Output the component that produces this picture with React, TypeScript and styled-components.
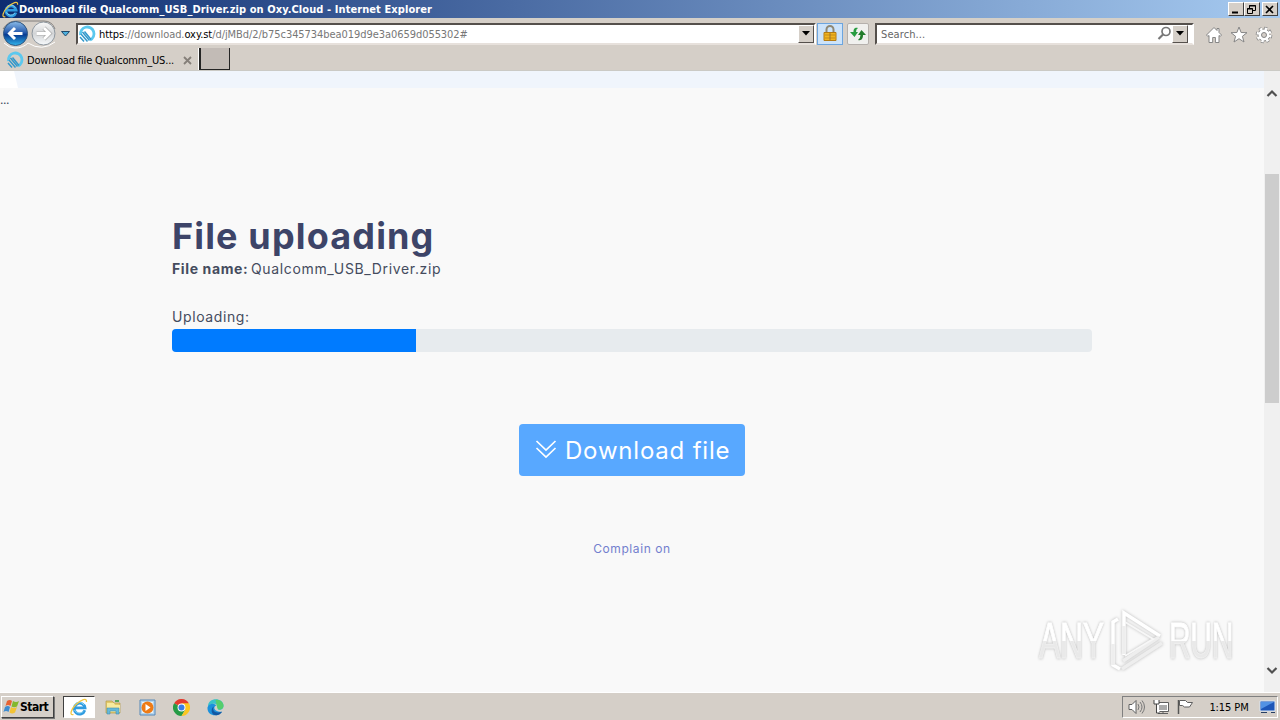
import React from 'react';
import styled, { createGlobalStyle } from 'styled-components';

const App = () => {
  return (
    <Desktop>
      <GlobalStyle />
      <TitleBar>
        <IeIcon size={17} />
        <TitleText>Download file Qualcomm_USB_Driver.zip on Oxy.Cloud - Internet Explorer</TitleText>
        <WindowButton aria-label="Minimize">
          <svg width="13" height="11"><path d="M3 8.500h6" stroke="#000" strokeWidth="2" /></svg>
        </WindowButton>
        <WindowButton aria-label="Restore">
          <svg width="13" height="11" fill="none" stroke="#000">
            <path d="M4.500 4V1.500h6v5H8M4 2h7M2.500 4.500h5v5h-5zM2 5h6" />
          </svg>
        </WindowButton>
        <WindowButton aria-label="Close" $gap={2}>
          <svg width="13" height="11"><path d="M3 2l7 7M10 2l-7 7" stroke="#000" strokeWidth="1.600" /></svg>
        </WindowButton>
      </TitleBar>

      <Toolbar>
        <NavButtons />
        <AddressBar>
          <OxyIcon />
          <Url>
            <b>https</b>://download.<b>oxy.st</b>/d/jMBd/2/b75c345734bea019d9e3a0659d055302#
          </Url>
          <DropButton><Triangle /></DropButton>
        </AddressBar>
        <LockButton><LockIcon /></LockButton>
        <RefreshButton><RefreshIcon /></RefreshButton>
        <SearchBar>
          <SearchText>Search...</SearchText>
          <svg width="15" height="15" viewBox="0 0 15 15" fill="none" stroke="#777">
            <circle cx="9" cy="5.500" r="4" strokeWidth="1.700" />
            <path d="M6 8.500L1.500 13" strokeWidth="2.200" />
          </svg>
          <DropButton><Triangle /></DropButton>
        </SearchBar>
        <ToolIcons>
          <svg width="18" height="18" viewBox="0 0 18 18" fill="#fff" stroke="#858585" strokeLinejoin="round">
            <path d="M9 1.500L1.500 9l1.300 1.400L4 9.500v7h3.700v-5h2.700v5H14v-7l1.300.9L16.500 9 14 6.500v-4h-2v2z" />
          </svg>
          <svg width="18" height="18" viewBox="0 0 18 18" fill="#fff" stroke="#858585" strokeLinejoin="round">
            <path d="M9 1l2.100 5.500 5.900.2-4.600 3.600L14 16l-5-3.300L4 16l1.600-5.700L1 6.700l5.900-.2z" />
          </svg>
          <GearIcon />
        </ToolIcons>
      </Toolbar>

      <TabRow>
        <Tab>
          <OxyIcon />
          <TabLabel>Download file Qualcomm_US...</TabLabel>
          <svg width="9" height="9"><path d="M1 1l7 7M8 1L1 8" stroke="#857f79" strokeWidth="1.800" /></svg>
        </Tab>
        <NewTab />
      </TabRow>

      <Viewport>
        <Page>
          <PageHeader>
            <svg width="20" height="17"><path d="M0 0h14l4 17H0z" fill="#fff" /></svg>
          </PageHeader>
          <Ellipsis>...</Ellipsis>
          <Content>
            <Heading>File uploading</Heading>
            <FileName>
              <FileLabel>File name:</FileLabel>
              <FileValue>Qualcomm_USB_Driver.zip</FileValue>
            </FileName>
            <UploadLabel>Uploading:</UploadLabel>
            <Progress><ProgressFill /></Progress>
            <DownloadButton>
              <svg width="22" height="20" viewBox="0 0 22 20" fill="none" stroke="#fff" strokeWidth="1.700">
                <path d="M1.500 1L11 10l9.500-9M1.500 8L11 17l9.500-9" />
              </svg>
              <DownloadText>Download file</DownloadText>
            </DownloadButton>
            <Complain>Complain on</Complain>
          </Content>
          <Watermark>
            <WatermarkText $scale={0.64}>ANY</WatermarkText>
            <PlayLogo />
            <WatermarkText $scale={0.6}>RUN</WatermarkText>
          </Watermark>
        </Page>
        <Scrollbar>
          <svg width="12" height="8"><path d="M1.500 7L6 2.500 10.500 7" fill="none" stroke="#505050" strokeWidth="2.200" /></svg>
          <Thumb />
          <svg width="12" height="8"><path d="M1.500 1L6 5.500 10.500 1" fill="none" stroke="#505050" strokeWidth="2.200" /></svg>
        </Scrollbar>
      </Viewport>

      <Taskbar>
        <StartButton>
          <WindowsIcon />
          <StartText>Start</StartText>
        </StartButton>
        <TaskButton $active><IeIcon size={18} /></TaskButton>
        <TaskButton><FolderIcon /></TaskButton>
        <TaskButton><PlayerIcon /></TaskButton>
        <TaskButton><ChromeIcon /></TaskButton>
        <TaskButton><EdgeIcon /></TaskButton>
        <Tray>
          <TrayIcons />
          <Clock>1:15 PM</Clock>
          <svg width="17" height="14" viewBox="0 0 17 14">
            <path d="M1 1h15v10H1z" fill="#1d56b8" stroke="#d9e5f2" />
            <path d="M2 2h13L2 9z" fill="#5292e4" />
            <path d="M2 12.500h6M12 12.500h4" stroke="#263e63" />
          </svg>
        </Tray>
      </Taskbar>
    </Desktop>
  );
};

export default App;

const IeIcon = ({ size }: { size: number }) => (
  <svg width={size} height={size} viewBox="0 0 18 18" fill="none">
    <path d="M14.800 12.300A5.400 5.400 0 1 1 15 9.800H5" stroke="#2f9be0" strokeWidth="2.800" />
    <path d="M13.500 13A5.400 5.400 0 0 1 4.500 12M4.500 7A5.500 5.500 0 0 1 14 7" stroke="#8bd8f7" />
    <path d="M3.500 16.500C-1 18 1 11 6 6.500S17 -1 16.500 4" stroke="#f0c643" strokeWidth="1.300" />
  </svg>
);

const OxyIcon = () => (
  <svg width="18" height="18" viewBox="0 0 18 18" fill="none">
    <path d="M2.500 10a6.800 6.800 0 1 1 9.500 5" stroke="#5bc8ee" strokeWidth="2.800" />
    <path d="M4.500 7l7 8.500M3 9l6.500 7.500M6.500 6.500l6.500 8M2 12l4 4.500" stroke="#3298cb" strokeWidth="1.500" />
  </svg>
);

const NavButtons = () => (
  <svg width="76" height="30" viewBox="0 0 76 30">
    <defs>
      <linearGradient id="back" x1="0" y1="0" x2="0" y2="1">
        <stop stopColor="#8bbce9" />
        <stop offset=".45" stopColor="#295cae" />
        <stop offset=".55" stopColor="#073b92" />
        <stop offset="1" stopColor="#32b6ed" />
      </linearGradient>
      <linearGradient id="forward" x1="0" y1="0" x2="0" y2="1">
        <stop stopColor="#fafafa" />
        <stop offset=".5" stopColor="#d2d4d6" />
        <stop offset="1" stopColor="#f7fafc" />
      </linearGradient>
    </defs>
    <path d="M3 10Q8 2 16 2h28q8 0 11 8" fill="none" stroke="#827f7d" />
    <path d="M4 24q5 5 11 5 8 0 13-5 14 9 27-1" fill="none" stroke="#fff" />
    <circle cx="15.500" cy="14.500" r="12" fill="url(#back)" stroke="#31567f" />
    <circle cx="43.500" cy="14.500" r="11.500" fill="url(#forward)" stroke="#8e979f" />
    <path d="M22.500 14.500H10M15 9l-5.500 5.500 5.500 5.500" fill="none" stroke="#fff" strokeWidth="3" />
    <path d="M36.500 14.500H49M44 9l5.500 5.500-5.500 5.500" fill="none" stroke="#aaa" strokeWidth="4.200" />
    <path d="M36.500 14.500H49M44 9l5.500 5.500-5.500 5.500" fill="none" stroke="#fff" strokeWidth="2.800" />
    <path d="M61.500 12.500h8L65.500 17z" fill="#4db1df" stroke="#214a6b" />
  </svg>
);

const Triangle = () => (
  <svg width="8" height="5"><path d="M0 0h8L4 4.500z" fill="#000" /></svg>
);

const LockIcon = () => (
  <svg width="14" height="18" viewBox="0 0 14 18">
    <path d="M3.500 8V4.500a3.500 3.500 0 0 1 7 0V8" fill="none" stroke="#8f8874" strokeWidth="2" />
    <path d="M1 7.500h12v8H1z" fill="#f0b421" stroke="#b37a13" />
    <path d="M2 10h10M2 13h10" stroke="#c78b16" />
    <path d="M7 8v7" stroke="#9b752c" />
  </svg>
);

const RefreshIcon = () => (
  <svg width="18" height="16" viewBox="0 0 18 16">
    <path d="M9 2C5 1 4.500 4 4.500 6H1l4.500 5L9 6H7q0-3 2-4z" fill="#279c40" />
    <path d="M9 14c4 1 5-2 5-5h3l-4.500-5L9 9h2.500q0 3-2.500 5z" fill="#237d2c" />
  </svg>
);

const GearIcon = () => (
  <svg width="18" height="18" viewBox="0 0 18 18">
    <circle cx="9" cy="9" r="6.800" fill="none" stroke="#858585" strokeWidth="3" strokeDasharray="2.900 2.440" />
    <circle cx="9" cy="9" r="6" fill="#fff" stroke="#858585" />
    <circle cx="9" cy="9" r="6.300" fill="none" stroke="#fff" strokeWidth="2.400" strokeDasharray="2.400 2.550" />
    <circle cx="9" cy="9" r="2.500" fill="#d5cfc8" stroke="#858585" />
  </svg>
);

const PlayLogo = () => (
  <Logo width="60" height="66" viewBox="0 0 60 66" fill="none" strokeWidth="3.500">
    <path d="M18 47V5l36 23M12 11L7 14v43l7 4" stroke="#fff" />
    <path d="M18 46V18M53 29L17 53M56 35L16 61M7 36v21" stroke="#eeeeee" />
    <path d="M19 14l28 17-28 17" stroke="#f7f7f7" strokeWidth="2" />
  </Logo>
);

const WindowsIcon = () => (
  <svg width="17" height="16" viewBox="0 0 17 16">
    <path d="M4 2q3-2 5 0L7.500 7q-2.500-2-5 0z" fill="#e76333" />
    <path d="M10 2q3 2 6 0l-2 5.500q-3 1.500-5.500 0z" fill="#83b82e" />
    <path d="M2 8q3-2 5 0l-1.500 5q-2.500-2-5 0z" fill="#3e8cd0" />
    <path d="M8 8q3 2 6 0l-2 5.500q-3 2-5.500 0z" fill="#f3c334" />
  </svg>
);

const FolderIcon = () => (
  <svg width="18" height="18" viewBox="0 0 18 18">
    <path d="M2 3h6l2 2h6v10H2z" fill="#e3c96b" stroke="#b69c4a" strokeWidth=".7" />
    <path d="M3 5h7l1 2h5v7H3z" fill="#f8eb9e" />
    <path d="M3 16v-6h12v6h-3v-3H6v3z" fill="#65b9d9" stroke="#458fae" strokeWidth=".6" />
    <path d="M11 3h4" stroke="#55a65a" strokeWidth="2" />
  </svg>
);

const PlayerIcon = () => (
  <svg width="17" height="17" viewBox="0 0 17 17">
    <path d="M1 1h15v15H1z" fill="#b5d5ed" stroke="#5688b9" />
    <path d="M3 3h11v11H3z" fill="#e9f3f9" />
    <circle cx="8.500" cy="8.500" r="6" fill="#ee7b16" />
    <path d="M6.500 5v7l5-3.500z" fill="#fff" />
  </svg>
);

const ChromeIcon = () => (
  <svg width="17" height="17" viewBox="0 0 18 18">
    <path d="M9 9L1.200 4.500a9 9 0 0 1 15.600 0z" fill="#e33b2e" />
    <path d="M9 9L1.200 4.500A9 9 0 0 0 9 18l4-6.700z" fill="#269b46" />
    <path d="M9 4.500h7.800A9 9 0 0 1 9 18l4-6.700z" fill="#fbc620" />
    <circle cx="9" cy="9" r="4.200" fill="#fff" />
    <circle cx="9" cy="9" r="3.200" fill="#397de6" />
  </svg>
);

const EdgeIcon = () => (
  <svg width="17" height="17" viewBox="0 0 18 18">
    <path d="M1 8C1-2 17-2 17.500 7c0 5-4 5-6 4 2-2 0-6-4-6C4 5 2 7 1 8z" fill="#3ac2c9" />
    <path d="M9 1c5-1 10 4 8 8-2 3-5 2-6 1z" fill="#55ce6c" />
    <path d="M.5 9C2 4 8 4 10 7c-4 1-3 7 6 6.500C11 20 0 18 .5 9z" fill="#1b91dc" />
    <path d="M7.500 8c-3 4 1 8 8.500 5.500-3 5-10 5-11 0-.5-3 1-5 2.500-5.500z" fill="#1257a2" />
  </svg>
);

const TrayIcons = () => (
  <svg width="69" height="18" viewBox="0 0 69 18" fill="#fff" stroke="#5f5f5f">
    <path d="M2 6.500h3l4-4v13l-4-4H2z" />
    <path d="M11 6q2 3 0 6M13 4q4 5 0 10M15 2.500q5 6.500 0 13" fill="none" stroke="#777" />
    <path d="M29.500 4.500h12v9h-12zM31 15.500h10M36 14v2" />
    <path d="M32 7h8v5h-8z" fill="#aaa" stroke="none" />
    <path d="M27 2v4h5V2M29.500 6v9H33" fill="#fff" stroke="#444" />
    <path d="M51.500 2v14" stroke="#555" strokeWidth="1.500" />
    <path d="M52.500 2.500h6l2 2h5l-3 4.500h-5l-2-1.500h-3z" />
  </svg>
);

const GlobalStyle = createGlobalStyle`
  * {
    box-sizing: border-box;
  }
  body {
    margin: 0;
    overflow: hidden;
  }
  svg {
    display: block;
    flex-shrink: 0;
  }
`;

const Desktop = styled.div`
  width: 1280px;
  height: 720px;
  display: flex;
  flex-direction: column;
  background-color: #d5cfc8;
  font-family: 'DejaVu Sans Condensed', 'DejaVu Sans', sans-serif;
  font-size: 11px;
  color: #000000;
  white-space: nowrap;
`;

const TitleBar = styled.div`
  height: 18px;
  display: flex;
  align-items: center;
  padding: 0 2px;
  background: linear-gradient(90deg, #0d2c70, #a6caf0);
`;

const TitleText = styled.span`
  flex: 1;
  color: #ffffff;
  font-weight: 700;
  letter-spacing: 0.08px;
`;

const WindowButton = styled.button<{ $gap?: number }>`
  width: 16px;
  height: 14px;
  padding: 0;
  margin-left: ${({ $gap }) => $gap ?? 0}px;
  background-color: #d5cfc8;
  border: 1px solid;
  border-color: #ffffff #404040 #404040 #ffffff;
`;

const Toolbar = styled.div`
  height: 30px;
  display: flex;
  align-items: center;
  border-top: 1px solid #d4d0c8;
`;

const AddressBar = styled.div`
  width: 740px;
  height: 22px;
  display: flex;
  align-items: center;
  background-color: #ffffff;
  border: 2px solid;
  border-color: #55504c #ffffff #e7e1dc #55504c;
`;

const Url = styled.span`
  flex: 1;
  margin-left: 3px;
  padding-top: 1px;
  color: #777777;
  letter-spacing: -0.06px;
  b {
    color: #000000;
    font-weight: 400;
  }
`;

const DropButton = styled.button`
  width: 16px;
  height: 18px;
  display: flex;
  align-items: center;
  justify-content: center;
  padding: 0;
  background-color: #d5cfc8;
  border: 1px solid;
  border-color: #ffffff #55504c #55504c #ffffff;
`;

const LockButton = styled.button`
  width: 26px;
  height: 22px;
  display: flex;
  justify-content: center;
  align-items: center;
  padding: 0;
  margin-left: 1px;
  border: 1px solid #6ca5df;
  background-color: #cce3fa;
`;

const RefreshButton = styled(LockButton)`
  width: 22px;
  margin-left: 4px;
  border-color: #b5b0ac;
  border-radius: 2px;
  background-color: #f0f0ee;
`;

const SearchBar = styled(AddressBar)`
  width: 319px;
  margin-left: 6px;
  padding-right: 4px;
`;

const SearchText = styled.span`
  flex: 1;
  margin-left: 4px;
  padding-top: 1px;
  color: #666666;
  letter-spacing: 0.1px;
`;

const ToolIcons = styled.div`
  display: flex;
  gap: 7px;
  margin: 2px 0 0 11px;
`;

const TabRow = styled.div`
  height: 23px;
  display: flex;
  border-bottom: 1px solid #cbcac5;
`;

const Tab = styled.div`
  width: 199px;
  display: flex;
  align-items: center;
  padding: 2px 6px 0;
  border-right: 1px solid #ffffff;
`;

const TabLabel = styled.span`
  flex: 1;
  margin-left: 3px;
  letter-spacing: -0.18px;
`;

const NewTab = styled.div`
  width: 31px;
  height: 22px;
  background-color: #c2bbb6;
  border: solid #242424;
  border-width: 0 1px 1px 2px;
`;

const Viewport = styled.div`
  height: 621px;
  display: flex;
`;

const Page = styled.main`
  position: relative;
  width: 1264px;
  background-color: #f9f9f9;
  color: #454c5e;
  font-family: Inter, 'Open Sans', sans-serif;
`;

const PageHeader = styled.div`
  height: 17px;
  background-color: #f0f5fc;
`;

const Ellipsis = styled.div`
  height: 24px;
  line-height: 24px;
  font-size: 12px;
  letter-spacing: -0.4px;
`;

const Content = styled.section`
  width: 920px;
  display: flex;
  flex-direction: column;
  margin: 102px auto 0 172px;
`;

const Heading = styled.h1`
  height: 44px;
  line-height: 45px;
  margin: 0;
  color: #3d4468;
  font-size: 36px;
  font-weight: 700;
  letter-spacing: 1.15px;
`;

const FileName = styled.div`
  display: flex;
  align-items: center;
  height: 21px;
  font-size: 14px;
`;

const FileLabel = styled.strong`
  width: 79px;
  letter-spacing: 0.62px;
`;

const FileValue = styled.span`
  letter-spacing: 0.65px;
`;

const UploadLabel = styled.div`
  height: 22px;
  line-height: 22px;
  margin-top: 27px;
  font-size: 14px;
  letter-spacing: 0.6px;
`;

const Progress = styled.div`
  height: 23px;
  margin-top: 1px;
  background-color: #e7ebee;
  border-radius: 4px;
  overflow: hidden;
`;

const ProgressFill = styled.div`
  width: 244px;
  height: 100%;
  background-color: #007bff;
`;

const DownloadButton = styled.button`
  width: 226px;
  height: 52px;
  display: flex;
  align-items: center;
  align-self: center;
  gap: 8px;
  padding: 0 0 0 16px;
  margin-top: 72px;
  background-color: #58a8ff;
  border: none;
  border-radius: 4px;
  color: #ffffff;
  font-family: inherit;
  font-size: 24px;
`;

const DownloadText = styled.span`
  font-weight: 400;
  letter-spacing: 0.8px;
`;

const Complain = styled.a`
  align-self: center;
  margin-top: 65px;
  line-height: 16px;
  color: #737fce;
  font-size: 12px;
  letter-spacing: 0.58px;
`;

const Watermark = styled.div`
  position: absolute;
  left: 1039px;
  top: 536px;
  width: 194px;
  height: 68px;
  display: flex;
  align-items: center;
  justify-content: space-between;
`;

/* wide glyphs are squeezed, so the box is pulled back by its margin */
const WatermarkText = styled.span<{ $scale: number }>`
  width: 106px;
  margin-right: -42px;
  color: transparent;
  background: linear-gradient(#ffffff 50%, #e9e9e9 50%);
  background-clip: text;
  -webkit-text-stroke: 1px #ffffff55;
  filter: drop-shadow(0 0 1.5px #b8b8b8);
  font-family: 'Liberation Sans', sans-serif;
  font-size: 50px;
  line-height: 56px;
  letter-spacing: -0.5px;
  transform: scaleX(${({ $scale }) => $scale});
  transform-origin: left;
`;

const Logo = styled.svg`
  filter: drop-shadow(0 0 1.5px #b8b8b8);
`;

const Scrollbar = styled.div`
  width: 16px;
  display: flex;
  flex-direction: column;
  align-items: center;
  padding: 18px 0 17px;
  background-color: #f0f0f0;
`;

const Thumb = styled.div`
  width: 14px;
  height: 229px;
  margin: 77px 0 auto;
  background-color: #cdcdcd;
`;

const Taskbar = styled.div`
  height: 28px;
  display: flex;
  align-items: center;
  padding: 1px 2px 0 1px;
  border-top: 1px solid #ffffff;
  gap: 2px;
`;

const StartButton = styled.button`
  width: 53px;
  height: 22px;
  display: flex;
  align-items: center;
  padding: 0 1px;
  margin-right: 7px;
  background-color: #d5cfc8;
  border: 1px solid;
  border-color: #ffffff #404040 #404040 #ffffff;
  box-shadow: 1px 1px #777777;
`;

const StartText = styled.span`
  font-family: 'DejaVu Sans Condensed', sans-serif;
  font-size: 12px;
  font-weight: 700;
  letter-spacing: -0.5px;
`;

const TaskButton = styled.button<{ $active?: boolean }>`
  width: 32px;
  height: 22px;
  display: flex;
  align-items: center;
  justify-content: center;
  padding: 0;
  background-color: ${({ $active }) => ($active ? '#ffffff' : 'transparent')};
  border: 1px solid transparent;
  border-color: ${({ $active }) => ($active ? '#404040 #ffffff #ffffff #404040' : 'transparent')};
`;

const Tray = styled.div`
  width: 156px;
  height: 22px;
  display: flex;
  align-items: center;
  margin-left: auto;
  padding: 0 1px 0 4px;
  border: 1px solid;
  border-color: #808080 #ffffff #ffffff #808080;
`;

const Clock = styled.span`
  flex: 1;
  text-align: center;
  padding-left: 3px;
  letter-spacing: -0.1px;
`;
